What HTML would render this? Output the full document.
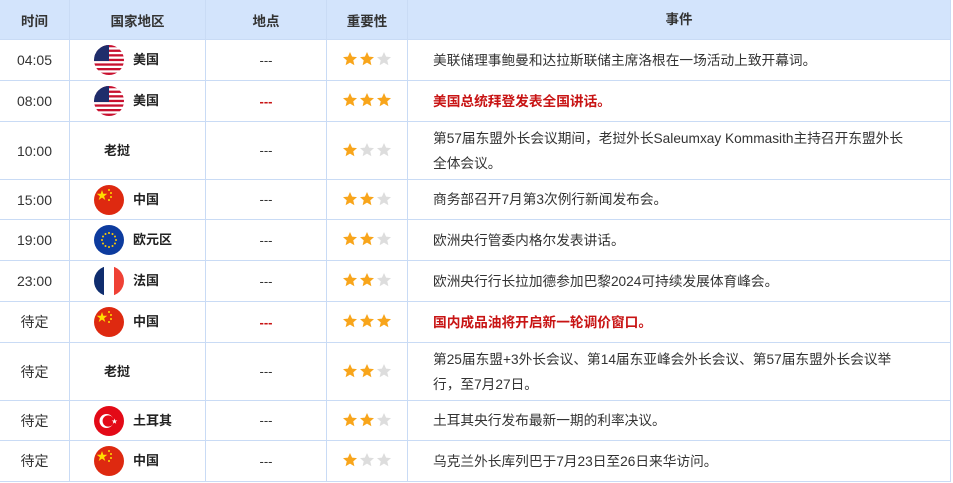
<!DOCTYPE html><html><head><meta charset="utf-8"><style>
*{margin:0;padding:0;box-sizing:border-box}
body{width:953px;height:483px;background:#fff;font-family:"Liberation Sans","Noto Sans CJK SC",sans-serif;font-size:13px;color:#333;overflow:hidden}
.r{position:relative;border-bottom:1px solid #c9dbf5;width:951px}
.r>div{position:absolute;top:0;bottom:0;display:flex;align-items:center}
.c1{left:0;width:70px;justify-content:center;border-right:1px solid #c9dbf5;font-size:14px}
.c2{left:70px;width:136px;border-right:1px solid #c9dbf5}
.c3{left:206px;width:121px;justify-content:center;border-right:1px solid #c9dbf5}
.c4{left:327px;width:81px;border-right:1px solid #c9dbf5;padding-left:15px;padding-bottom:2px}
.c5{left:408px;width:543px;border-right:1px solid #c9dbf5;padding:0 20px 0 25px;line-height:25px;font-size:13.7px}
.h{background:#d3e4fc;height:40px;font-weight:bold}
.h>div{justify-content:center;padding:0!important;font-size:13.5px}
.flag{width:30px;height:30px;border-radius:50%;margin-left:24px;margin-right:9px;flex:none;overflow:hidden}
.cn{font-weight:bold;color:#222;font-size:13px;line-height:1;margin-top:-1px}
.red{color:#c81414;font-weight:bold}
.s{width:16px;height:16px;margin-right:1px}
</style></head><body>
<svg width="0" height="0" style="position:absolute"><defs>
<symbol id="st" viewBox="0 0 24 24"><path d="M12 1.5l3.1 7 7.4.6-5.6 4.9 1.7 7.4L12 17.5 5.4 21.4l1.7-7.4L1.5 9.1l7.4-.6z"/></symbol>
<symbol id="us" viewBox="0 0 30 30"><rect width="30" height="30" fill="#fff"/><g fill="#c8102e"><rect y="0" width="30" height="2.3"/><rect y="4.6" width="30" height="2.3"/><rect y="9.2" width="30" height="2.3"/><rect y="13.8" width="30" height="2.3"/><rect y="18.4" width="30" height="2.3"/><rect y="23" width="30" height="2.3"/><rect y="27.6" width="30" height="2.4"/></g><rect width="15" height="16" fill="#1f2d6b"/></symbol>
<symbol id="cn" viewBox="0 0 30 30"><rect width="30" height="30" fill="#de2910"/><path fill="#ffde00" d="M8 5l1.3 3.8h4l-3.2 2.4 1.2 3.8L8 12.6 4.7 15l1.2-3.8L2.7 8.8h4z"/><circle cx="15" cy="5" r="1" fill="#ffde00"/><circle cx="17" cy="8" r="1" fill="#ffde00"/><circle cx="17" cy="12" r="1" fill="#ffde00"/><circle cx="15" cy="15" r="1" fill="#ffde00"/></symbol>
</defs></svg>
<div class="r h"><div class="c1">时间</div><div class="c2">国家地区</div><div class="c3">地点</div><div class="c4">重要性</div><div class="c5">事件</div></div>

<div class="r" style="height:41px"><div class="c1">04:05</div><div class="c2"><svg class="flag"><use href="#us"/></svg><span class="cn">美国</span></div><div class="c3">---</div><div class="c4"><svg class="s" fill="#f8a51b"><use href="#st"/></svg><svg class="s" fill="#f8a51b"><use href="#st"/></svg><svg class="s" fill="#ddd"><use href="#st"/></svg></div><div class="c5">美联储理事鲍曼和达拉斯联储主席洛根在一场活动上致开幕词。</div></div>

<div class="r" style="height:41px"><div class="c1">08:00</div><div class="c2"><svg class="flag"><use href="#us"/></svg><span class="cn">美国</span></div><div class="c3 red">---</div><div class="c4"><svg class="s" fill="#f8a51b"><use href="#st"/></svg><svg class="s" fill="#f8a51b"><use href="#st"/></svg><svg class="s" fill="#f8a51b"><use href="#st"/></svg></div><div class="c5 red">美国总统拜登发表全国讲话。</div></div>

<div class="r" style="height:58px"><div class="c1">10:00</div><div class="c2"><span class="cn" style="margin-left:34px">老挝</span></div><div class="c3">---</div><div class="c4"><svg class="s" fill="#f8a51b"><use href="#st"/></svg><svg class="s" fill="#ddd"><use href="#st"/></svg><svg class="s" fill="#ddd"><use href="#st"/></svg></div><div class="c5"><span>第57届东盟外长会议期间，老挝外长Saleumxay Kommasith主持召开东盟外长<br>全体会议。</span></div></div>

<div class="r" style="height:40px"><div class="c1">15:00</div><div class="c2"><svg class="flag"><use href="#cn"/></svg><span class="cn">中国</span></div><div class="c3">---</div><div class="c4"><svg class="s" fill="#f8a51b"><use href="#st"/></svg><svg class="s" fill="#f8a51b"><use href="#st"/></svg><svg class="s" fill="#ddd"><use href="#st"/></svg></div><div class="c5">商务部召开7月第3次例行新闻发布会。</div></div>

<div class="r" style="height:41px"><div class="c1">19:00</div><div class="c2"><svg class="flag" viewBox="0 0 30 30"><rect width="30" height="30" fill="#0d3b9e"/><g fill="#ffcc00"><circle cx="15" cy="8" r="1"/><circle cx="18.5" cy="9" r="1"/><circle cx="21" cy="11.5" r="1"/><circle cx="22" cy="15" r="1"/><circle cx="21" cy="18.5" r="1"/><circle cx="18.5" cy="21" r="1"/><circle cx="15" cy="22" r="1"/><circle cx="11.5" cy="21" r="1"/><circle cx="9" cy="18.5" r="1"/><circle cx="8" cy="15" r="1"/><circle cx="9" cy="11.5" r="1"/><circle cx="11.5" cy="9" r="1"/></g></svg><span class="cn">欧元区</span></div><div class="c3">---</div><div class="c4"><svg class="s" fill="#f8a51b"><use href="#st"/></svg><svg class="s" fill="#f8a51b"><use href="#st"/></svg><svg class="s" fill="#ddd"><use href="#st"/></svg></div><div class="c5">欧洲央行管委内格尔发表讲话。</div></div>

<div class="r" style="height:41px"><div class="c1">23:00</div><div class="c2"><svg class="flag" viewBox="0 0 30 30"><rect width="10" height="30" fill="#0f2d6e"/><rect x="10" width="10" height="30" fill="#fff"/><rect x="20" width="10" height="30" fill="#ef4135"/></svg><span class="cn">法国</span></div><div class="c3">---</div><div class="c4"><svg class="s" fill="#f8a51b"><use href="#st"/></svg><svg class="s" fill="#f8a51b"><use href="#st"/></svg><svg class="s" fill="#ddd"><use href="#st"/></svg></div><div class="c5">欧洲央行行长拉加德参加巴黎2024可持续发展体育峰会。</div></div>

<div class="r" style="height:41px"><div class="c1">待定</div><div class="c2"><svg class="flag"><use href="#cn"/></svg><span class="cn">中国</span></div><div class="c3 red">---</div><div class="c4"><svg class="s" fill="#f8a51b"><use href="#st"/></svg><svg class="s" fill="#f8a51b"><use href="#st"/></svg><svg class="s" fill="#f8a51b"><use href="#st"/></svg></div><div class="c5 red">国内成品油将开启新一轮调价窗口。</div></div>

<div class="r" style="height:58px"><div class="c1">待定</div><div class="c2"><span class="cn" style="margin-left:34px">老挝</span></div><div class="c3">---</div><div class="c4"><svg class="s" fill="#f8a51b"><use href="#st"/></svg><svg class="s" fill="#f8a51b"><use href="#st"/></svg><svg class="s" fill="#ddd"><use href="#st"/></svg></div><div class="c5"><span>第25届东盟+3外长会议、第14届东亚峰会外长会议、第57届东盟外长会议举<br>行，至7月27日。</span></div></div>

<div class="r" style="height:40px"><div class="c1">待定</div><div class="c2"><svg class="flag" viewBox="0 0 30 30"><rect width="30" height="30" fill="#e30a17"/><circle cx="12.5" cy="15" r="7" fill="#fff"/><circle cx="14.2" cy="15" r="5.6" fill="#e30a17"/><path fill="#fff" d="M20.5 12.5l.7 2 2.1 0-1.7 1.3.6 2-1.7-1.2-1.7 1.2.6-2-1.7-1.3 2.1 0z"/></svg><span class="cn">土耳其</span></div><div class="c3">---</div><div class="c4"><svg class="s" fill="#f8a51b"><use href="#st"/></svg><svg class="s" fill="#f8a51b"><use href="#st"/></svg><svg class="s" fill="#ddd"><use href="#st"/></svg></div><div class="c5">土耳其央行发布最新一期的利率决议。</div></div>

<div class="r" style="height:41px"><div class="c1">待定</div><div class="c2"><svg class="flag"><use href="#cn"/></svg><span class="cn">中国</span></div><div class="c3">---</div><div class="c4"><svg class="s" fill="#f8a51b"><use href="#st"/></svg><svg class="s" fill="#ddd"><use href="#st"/></svg><svg class="s" fill="#ddd"><use href="#st"/></svg></div><div class="c5">乌克兰外长库列巴于7月23日至26日来华访问。</div></div>
</body></html>
